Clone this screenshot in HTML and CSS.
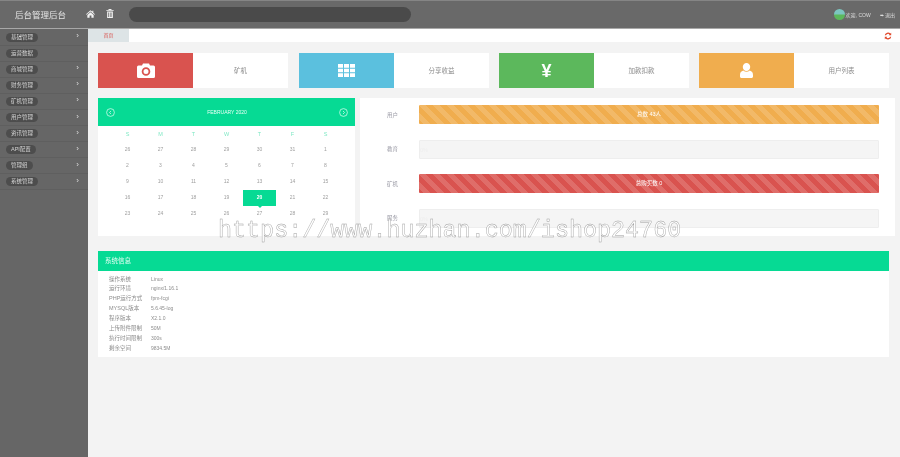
FILE: index.html
```html
<!DOCTYPE html>
<html lang="zh">
<head>
<meta charset="utf-8">
<title>后台管理后台</title>
<link rel="stylesheet" href="styles.css">
</head>
<body>
<header class="topbar">
  <div class="brand">后台管理后台</div>
  <svg class="top-icon home" viewBox="0 0 12 10"><path d="M6 0 0 5.200l.7.8L6 1.500 11.300 6l.7-.8L9.800 3.300V.6H8.400V2zM1.800 6.200V10h3V7h2.400v3h3V6.200L6 2.600z"/></svg>
  <svg class="top-icon trash" viewBox="0 0 9 11"><path d="M3 0h3l.6 1.200H9v1H0v-1h2.400zM1 3h7v8H1zm1.400 1.200v5.600h1V4.200zm2 0v5.600h.8V4.200zm1.800 0v5.600h.6V4.200z"/></svg>
  <div class="search"></div>
  <div class="user">
    <span class="avatar"></span>
    <span class="welcome">欢迎, COW</span>
    <span class="logout">➨ 退出</span>
  </div>
</header>
<div class="layout">
  <nav class="sidebar">
    <div class="nav-item"><span class="pill">基础管理</span><span class="chev">›</span></div>
    <div class="nav-item"><span class="pill">运营数据</span></div>
    <div class="nav-item"><span class="pill">商城管理</span><span class="chev">›</span></div>
    <div class="nav-item"><span class="pill">财务管理</span><span class="chev">›</span></div>
    <div class="nav-item"><span class="pill">矿机管理</span><span class="chev">›</span></div>
    <div class="nav-item"><span class="pill">用户管理</span><span class="chev">›</span></div>
    <div class="nav-item"><span class="pill">资讯管理</span><span class="chev">›</span></div>
    <div class="nav-item"><span class="pill">API配置</span><span class="chev">›</span></div>
    <div class="nav-item"><span class="pill">管理组</span><span class="chev">›</span></div>
    <div class="nav-item"><span class="pill">系统管理</span><span class="chev">›</span></div>
  </nav>
  <main class="main">
    <div class="tabs">
      <span class="tab">首页</span>
      <svg class="refresh" viewBox="0 0 10 10"><path d="M1 4.200A4 4 0 0 1 8 2l1-1v3.200H5.800l1.100-1.100A2.600 2.600 0 0 0 2.500 4.200zM9 5.800A4 4 0 0 1 2 8l-1 1V5.800h3.200L3.100 6.900a2.600 2.600 0 0 0 4.400-1.100z"/></svg>
    </div>
    <div class="content">
      <section class="cards">
        <div class="card"><div class="card-icon red">
          <svg class="ico-camera" viewBox="0 0 18 15"><path fill-rule="evenodd" d="M1.500 2.500H5L6 .5h6l1 2h3.500A1.500 1.500 0 0 1 18 4v9.500a1.500 1.500 0 0 1-1.500 1.500h-15A1.500 1.500 0 0 1 0 13.500V4a1.500 1.500 0 0 1 1.500-1.500zM9 4.200a4.300 4.300 0 1 0 0 8.600 4.300 4.300 0 0 0 0-8.600zm0 1.800a2.500 2.500 0 1 1 0 5 2.500 2.500 0 0 1 0-5z"/></svg>
        </div><div class="card-label">矿机</div></div>
        <div class="card"><div class="card-icon blue">
          <svg class="ico-grid" viewBox="0 0 17 13"><path d="M0 0h5v3.700H0zM6 0h5v3.700H6zM12 0h5v3.700h-5zM0 4.700h5v3.600H0zM6 4.700h5v3.600H6zM12 4.700h5v3.600h-5zM0 9.300h5V13H0zM6 9.300h5V13H6zM12 9.300h5V13h-5z"/></svg>
        </div><div class="card-label">分享收益</div></div>
        <div class="card"><div class="card-icon green"><span class="yen">¥</span></div><div class="card-label">加款扣款</div></div>
        <div class="card"><div class="card-icon orange">
          <svg class="ico-user" viewBox="0 0 13 15"><path d="M6.500 0a3.700 3.700 0 0 1 3.700 3.900c0 2.100-1.500 4-3.700 4s-3.700-1.900-3.700-4A3.700 3.700 0 0 1 6.500 0zM3.300 7.600c.9.800 2 1.200 3.200 1.200s2.300-.4 3.200-1.200C11.800 8.200 13 9.800 13 12v1.500c0 .9-.7 1.500-1.500 1.500h-10C.7 15 0 14.400 0 13.500V12c0-2.200 1.200-3.800 3.300-4.400z"/></svg>
        </div><div class="card-label">用户列表</div></div>
      </section>
      <section class="middle">
        <div class="calendar">
          <div class="cal-head">
            <svg class="cal-arrow" viewBox="0 0 9 9"><circle cx="4.500" cy="4.500" r="3.900"/><path d="M5 3 3.500 4.500 5 6"/></svg>
            <span>FEBRUARY 2020</span>
            <svg class="cal-arrow" viewBox="0 0 9 9"><circle cx="4.500" cy="4.500" r="3.900"/><path d="M4 3l1.500 1.500L4 6"/></svg>
          </div>
          <div class="cal-grid">
            <span class="dow">S</span><span class="dow">M</span><span class="dow">T</span><span class="dow">W</span><span class="dow">T</span><span class="dow">F</span><span class="dow">S</span>
            <span>26</span><span>27</span><span>28</span><span>29</span><span>30</span><span>31</span><span>1</span>
            <span>2</span><span>3</span><span>4</span><span>5</span><span>6</span><span>7</span><span>8</span>
            <span>9</span><span>10</span><span>11</span><span>12</span><span>13</span><span>14</span><span>15</span>
            <span>16</span><span>17</span><span>18</span><span>19</span><span class="today">20</span><span>21</span><span>22</span>
            <span>23</span><span>24</span><span>25</span><span>26</span><span>27</span><span>28</span><span>29</span>
          </div>
        </div>
        <div class="stats">
          <div class="stat"><span class="stat-label">用户</span><div class="bar orange-bar">总数 43人</div></div>
          <div class="stat"><span class="stat-label">教育</span><div class="bar empty">0%</div></div>
          <div class="stat"><span class="stat-label">矿机</span><div class="bar red-bar">总购买数 0</div></div>
          <div class="stat"><span class="stat-label">服务</span><div class="bar empty">0%</div></div>
        </div>
      </section>
      <section class="sysinfo">
        <h2 class="sys-head">系统信息</h2>
        <dl class="sys-list">
          <dt>操作系统</dt><dd>Linux</dd>
          <dt>运行环境</dt><dd>nginx/1.16.1</dd>
          <dt>PHP运行方式</dt><dd>fpm-fcgi</dd>
          <dt>MYSQL版本</dt><dd>5.6.45-log</dd>
          <dt>程序版本</dt><dd>X2.1.0</dd>
          <dt>上传附件限制</dt><dd>50M</dd>
          <dt>执行时间限制</dt><dd>300s</dd>
          <dt>剩余空间</dt><dd>9834.5M</dd>
        </dl>
      </section>
    </div>
  </main>
</div>
<div class="watermark">https://www.huzhan.com/ishop24760</div>
</body>
</html>
```
FILE: styles.css
```css
* { box-sizing: border-box; }
html, body { margin: 0; height: 457px; overflow: hidden; }
body {
  font-family: "Liberation Sans", "Noto Sans CJK SC", sans-serif;
  font-size: 6px;
  color: #888;
  background: #f3f3f3;
  position: relative;
}
.topbar, .layout { filter: blur(.25px); }
.topbar {
  height: 29px;
  display: flex;
  align-items: center;
  background: #696969;
  border-top: 1px solid #858585;
  border-bottom: 1px solid #a8a8a8;
  color: #fff;
}
.brand { width: 86px; padding-left: 15px; margin-bottom: 2px; font-size: 8.500px; color: #e4e4e4; }
.top-icon { fill: #f2f2f2; margin-bottom: 2px; }
.home { width: 9px; height: 8px; }
.trash { width: 8px; height: 9px; margin-left: 11px; }
.search {
  width: 282px;
  height: 15px;
  margin-left: 15px;
  border-radius: 8px;
  background: #4a4a4a;
}
.user {
  margin-left: auto;
  margin-bottom: 1px;
  display: flex;
  align-items: center;
  padding-right: 5px;
  color: #ddd;
  font-size: 5px;
}
.avatar {
  width: 11px;
  height: 11px;
  border-radius: 50%;
  margin-right: 1px;
  background: linear-gradient(#7cc6c0 45%, #5cb85c 55%);
}
.welcome { width: 34px; }
.layout { display: flex; height: 428px; }
.sidebar {
  width: 88px;
  flex: none;
  padding-top: .5px;
  background: #666;
}
.nav-item {
  height: 16.100px;
  display: flex;
  align-items: center;
  justify-content: space-between;
  padding: 0 9px 0 6px;
  border-bottom: 1px solid #5f5f5f;
  color: #d4d4d4;
}
.pill {
  padding: 0 5px;
  height: 9px;
  line-height: 9px;
  border-radius: 5px;
  background: #4d4d4d;
  font-size: 5.500px;
}
.chev { font-size: 8px; line-height: 8px; color: #ddd; margin-bottom: 2px; }
.main { flex: 1; min-width: 0; display: flex; flex-direction: column; }
.tabs {
  height: 13px;
  background: #fff;
  display: flex;
  align-items: center;
  justify-content: space-between;
  padding-right: 8px;
}
.tab {
  width: 41px;
  height: 13px;
  line-height: 13px;
  text-align: center;
  background: #dde4e6;
  color: #d9534f;
  font-size: 5px;
}
.refresh { width: 8px; height: 8px; fill: #e0492c; }
.content { padding: 11px 11px 0 10px; }
.cards {
  display: grid;
  grid-template-columns: 201px 200px 200px 190px;
}
.card { width: 190px; height: 35px; display: flex; background: #fff; }
.card-icon {
  width: 95px;
  display: flex;
  align-items: center;
  justify-content: center;
  fill: #fff;
  color: #fff;
}
.red { background: #d9534f; }
.blue { background: #5bc0de; }
.green { background: #5cb85c; }
.orange { background: #f0ad4e; }
.ico-camera { width: 18px; height: 15px; }
.ico-grid { width: 17px; height: 13px; }
.ico-user { width: 13px; height: 15px; }
.yen { font-size: 18px; font-weight: bold; line-height: 1; }
.card-label { flex: 1; text-align: center; line-height: 35px; font-size: 6.500px; color: #8c8c8c; }
.middle { display: flex; margin-top: 10px; gap: 5px; margin-right: -6px; }
.calendar { width: 257px; height: 138px; background: #fff; flex: none; }
.cal-head {
  height: 28px;
  display: flex;
  align-items: center;
  justify-content: space-between;
  padding: 0 7px 0 8px;
  background: #06da94;
  color: #eafff6;
  font-size: 5px;
}
.cal-arrow { width: 9px; height: 9px; fill: none; stroke: #eafff6; stroke-width: .7; }
.cal-grid {
  display: grid;
  grid-template-columns: repeat(7, 33px);
  grid-auto-rows: 15.900px;
  padding: .5px 13px 0;
  text-align: center;
  color: #a0a0a0;
  font-size: 5px;
}
.cal-grid span { line-height: 15.900px; position: relative; }
.cal-grid .dow { color: #7fe8c4; font-size: 5.500px; }
.cal-grid .today {
  background: #06da94;
  color: #fff;
  font-weight: bold;
}
.today::after {
  content: "";
  position: absolute;
  left: 50%;
  bottom: -2px;
  margin-left: -2px;
  border: 2px solid transparent;
  border-bottom: 0;
  border-top-color: #06da94;
}
.stats {
  flex: 1;
  height: 138px;
  background: #fff;
  padding: 7px 16px 0 27px;
  display: flex;
  flex-direction: column;
  gap: 15.500px;
}
.stat { display: flex; align-items: center; }
.stat-label { width: 32px; color: #9a9aa5; font-size: 5.500px; }
.bar {
  flex: 1;
  height: 19px;
  line-height: 19px;
  text-align: center;
  border-radius: 1px;
  color: #fff;
  font-size: 5.500px;
  background-size: 14px 14px;
  background-image: linear-gradient(45deg, rgba(255,255,255,.15) 25%, transparent 25%, transparent 50%, rgba(255,255,255,.15) 50%, rgba(255,255,255,.15) 75%, transparent 75%, transparent);
}
.orange-bar { background-color: #f0ad4e; }
.red-bar { background-color: #d9534f; }
.bar.empty {
  background-color: #f5f5f5;
  background-image: none;
  border: 1px solid #eee;
  color: #eee;
  text-align: left;
}
.sysinfo { margin-top: 15px; background: #fff; height: 106px; }
.sys-head {
  margin: 0;
  height: 20px;
  line-height: 20px;
  padding-left: 7px;
  background: #06da94;
  color: #eafff6;
  font-size: 6.500px;
  font-weight: normal;
}
.sys-list {
  margin: 3.500px 0 0;
  padding-left: 11px;
  display: grid;
  grid-template-columns: 42px 1fr;
  grid-auto-rows: 9.900px;
  line-height: 9.900px;
  color: #8c8c8c;
  font-size: 5.500px;
}
.sys-list dd { margin: 0; font-size: 5px; }
.watermark {
  position: absolute;
  left: 218px;
  top: 216px;
  font-family: "Liberation Mono", monospace;
  font-size: 23.400px;
  line-height: 30px;
  white-space: nowrap;
  color: #fff;
  opacity: .85;
  -webkit-text-stroke: .4px #8a8a8a;
}
```
